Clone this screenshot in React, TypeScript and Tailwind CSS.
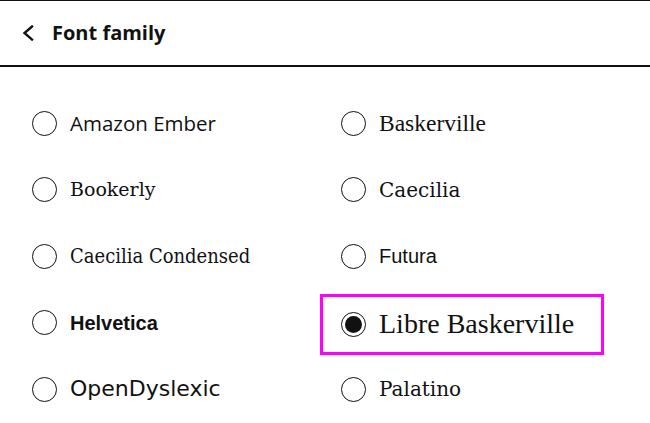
const fonts = [
  { name: 'Amazon Ember', cls: "font-['Open_Sans',sans-serif] text-[20.5px]" },
  { name: 'Baskerville', cls: "font-['Liberation_Serif',serif] text-[23.5px]" },
  { name: 'Bookerly', cls: "font-['DejaVu_Serif',serif] text-[19px]" },
  { name: 'Caecilia', cls: "font-['DejaVu_Serif',serif] text-[20px]" },
  { name: 'Caecilia Condensed', cls: "font-['DejaVu_Serif_Condensed','DejaVu_Serif',serif] text-[20px]" },
  { name: 'Futura', cls: "font-['Liberation_Sans',sans-serif] text-[20px]" },
  { name: 'Helvetica', cls: "font-['Liberation_Sans',sans-serif] font-bold text-[20px]" },
  { name: 'Libre Baskerville', cls: "font-['Liberation_Serif',serif] text-[28px]", selected: true },
  { name: 'OpenDyslexic', cls: "font-['DejaVu_Sans',sans-serif] text-[22px]" },
  { name: 'Palatino', cls: "font-['DejaVu_Serif',serif] text-[20px]" },
];

function Radio({ checked }: { checked?: boolean }) {
  return (
    <div className="w-[25px] h-[25px] shrink-0 rounded-full border-[1.5px] border-[#111] flex items-center justify-center">
      {checked && <div className="w-[17px] h-[17px] rounded-full bg-[#111]" />}
    </div>
  );
}

export default function App() {
  return (
    <div className="w-[650px] h-[423px] bg-white text-[#111] overflow-hidden">
      <header className="h-[67px] border-t border-b-2 border-[#111] flex items-center gap-[18px] pl-[22px]">
        <svg width="12" height="16" viewBox="0 0 12 16" fill="none" stroke="#111" strokeWidth="2.4" strokeLinecap="square">
          <polyline points="10,1.5 2.5,8 10,14.5" />
        </svg>
        <h1 className="font-['Open_Sans',sans-serif] font-bold text-[20px] leading-none">Font family</h1>
      </header>

      <div className="grid grid-cols-[309px_1fr] auto-rows-[66.5px] pt-[23px] pl-[32px]">
        {fonts.map((f) =>
          f.selected ? (
            <div key={f.name} className="flex items-center">
              <div className="-ml-[21px] mt-[3px] w-[284px] h-[61px] border-[3px] border-[#ff00ff] flex items-center gap-[13px] pl-[18px]">
                <Radio checked />
                <span className={f.cls + ' leading-none'}>{f.name}</span>
              </div>
            </div>
          ) : (
            <div key={f.name} className="flex items-center gap-[13px]">
              <Radio />
              <span className={f.cls + ' leading-none'}>{f.name}</span>
            </div>
          )
        )}
      </div>
    </div>
  );
}
